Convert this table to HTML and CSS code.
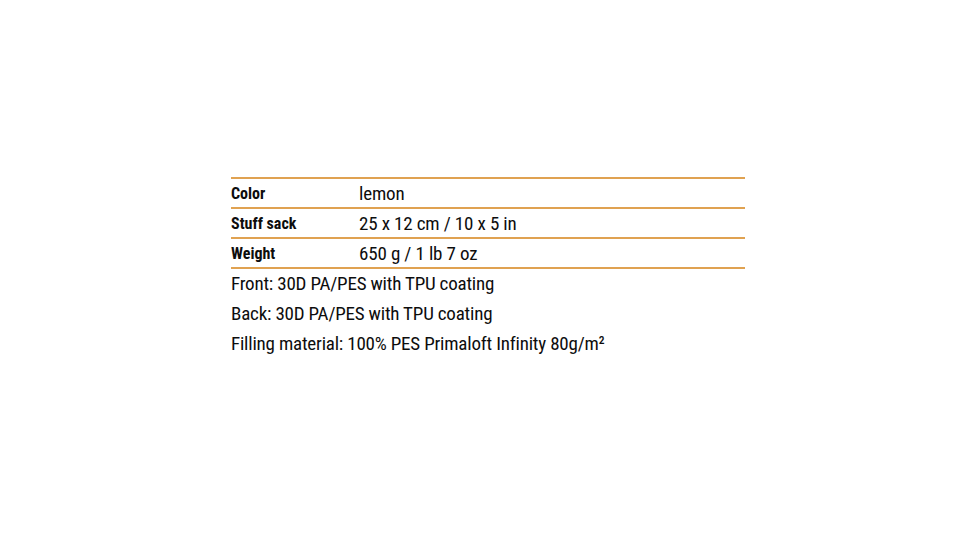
FILE: index.html
```html
<!DOCTYPE html>
<html>
<head>
<meta charset="utf-8">
<link rel="stylesheet" href="styles.css">
</head>
<body>
<div class="page">
  <div class="spec">
    <table class="specs">
      <tr><th>Color</th><td>lemon</td></tr>
      <tr><th>Stuff sack</th><td>25 x 12 cm / 10 x 5 in</td></tr>
      <tr><th>Weight</th><td>650 g / 1 lb 7 oz</td></tr>
    </table>
    <p class="line">Front: 30D PA/PES with TPU coating</p>
    <p class="line">Back: 30D PA/PES with TPU coating</p>
    <p class="line">Filling material: 100% PES Primaloft Infinity 80g/m²</p>
  </div>
</div>
</body>
</html>
```
FILE: styles.css
```css
html, body { margin: 0; padding: 0; background: #fff; }
body { font-family: "Roboto Condensed", "Open Sans", sans-serif; color: #0d0d0d; }
.page { width: 978px; height: 550px; padding-top: 177px; box-sizing: border-box; }
.spec { margin-left: 231px; width: 514px; }
.specs { width: 100%; border-collapse: collapse; border-top: 2px solid #e0a251; }
.specs th, .specs td { border-bottom: 2px solid #e0a251; height: 28px; padding: 0; vertical-align: middle; text-align: left; }
.specs th { width: 128px; font-size: 16px; font-weight: bold; letter-spacing: 0; }
.specs td { font-size: 19px; letter-spacing: -0.15px; }
.line { margin: 0; height: 30px; line-height: 30px; font-size: 19px; letter-spacing: -0.2px; }
```
